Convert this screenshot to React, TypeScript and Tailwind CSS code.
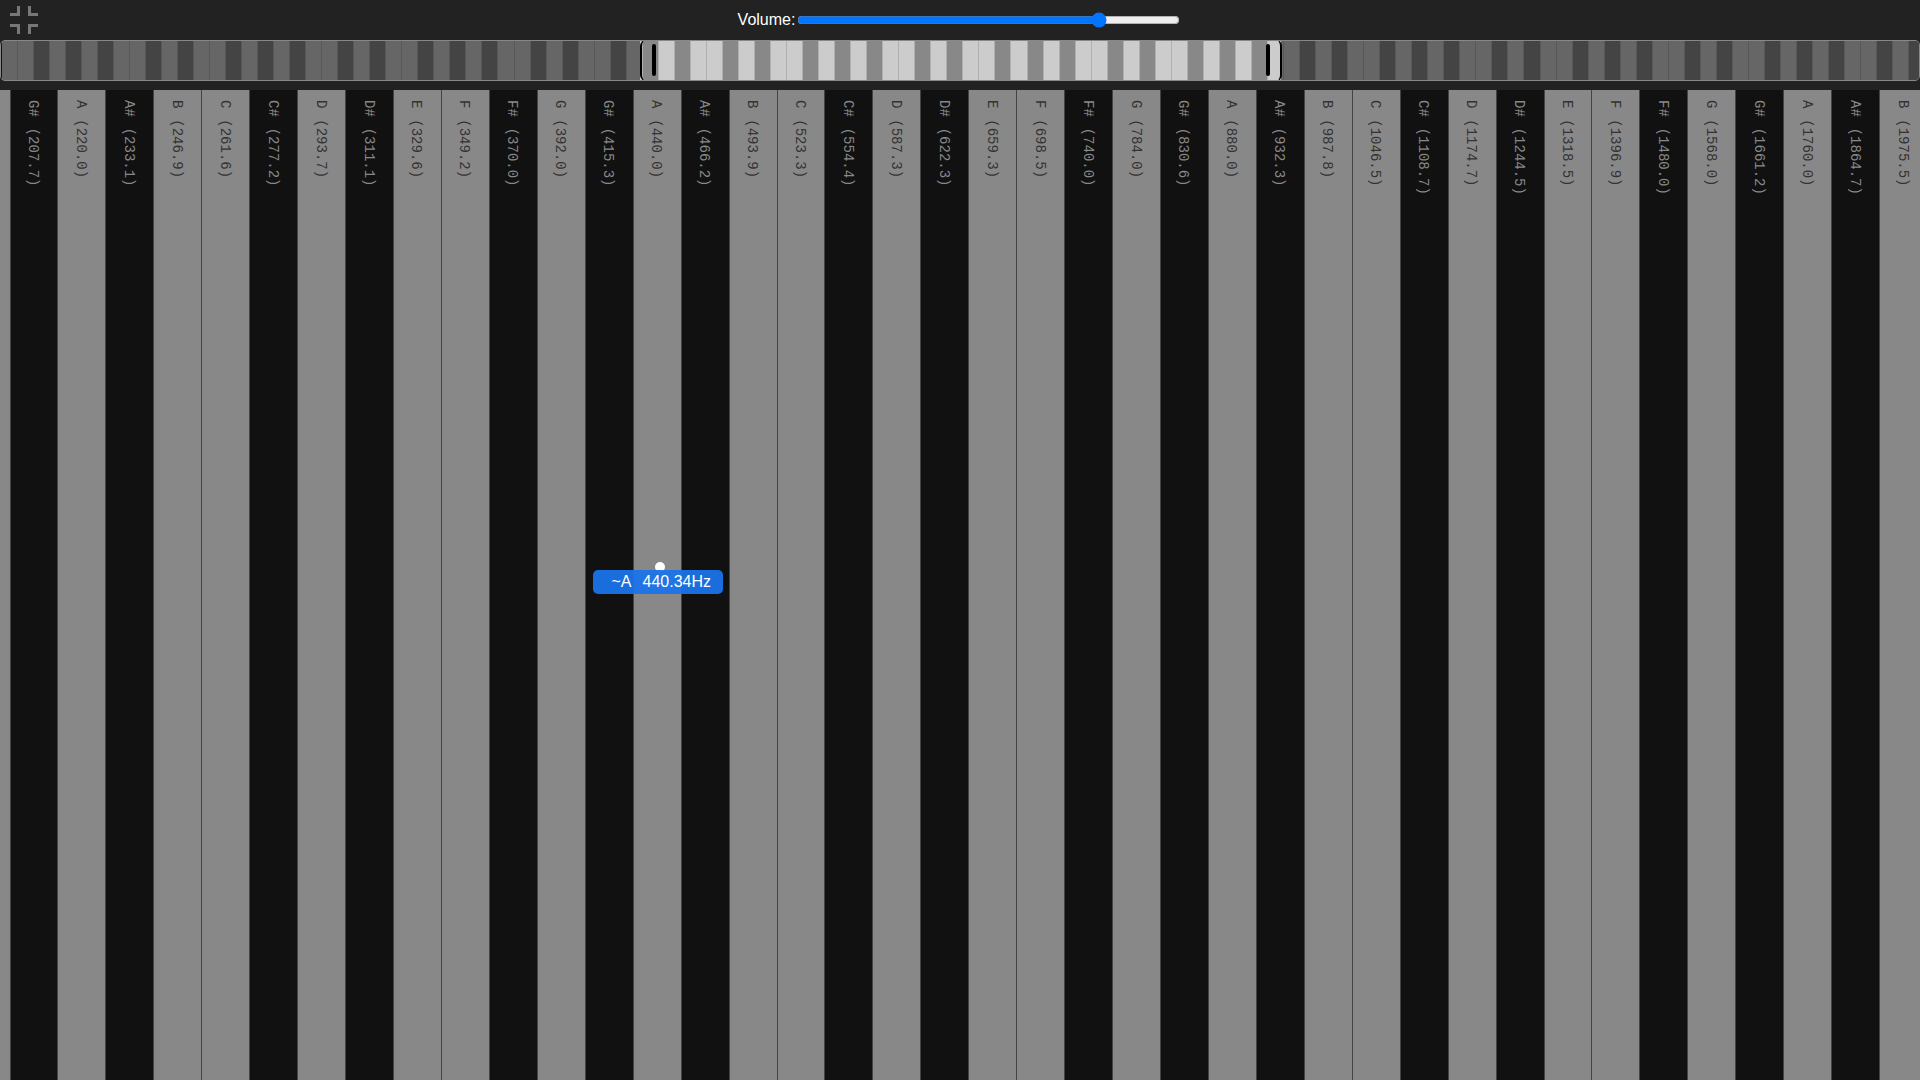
const NAMES = ["C", "C#", "D", "D#", "E", "F", "F#", "G", "G#", "A", "A#", "B"];
const noteOf = (midi: number) => NAMES[midi % 12];
const isBlack = (midi: number) => noteOf(midi).includes("#");

// Piano range on the overview strip starts at E0 (midi 16); main view starts at G#3 (midi 56).
const overview = Array.from({ length: 120 }, (_, i) => 16 + i);
const keys = Array.from({ length: 40 }, (_, i) => 56 + i);

function OverviewKey({ midi }: { midi: number }) {
  const black = isBlack(midi);
  return (
    <div
      className={`w-[16.04px] shrink-0 h-full border-r border-[#b0b0b0] ${black ? "bg-[#888888]" : "bg-[#cccccc]"}`}
    />
  );
}

function Key({ midi }: { midi: number }) {
  const black = isBlack(midi);
  const freq = 440 * Math.pow(2, (midi - 69) / 12);
  return (
    <div
      className={`w-[47.95px] shrink-0 h-full flex justify-center pt-[10px] pr-[2px] border-r border-[#444444] ${
        black ? "bg-[#111111] text-[#888888]" : "bg-[#888888] text-[#333333]"
      }`}
    >
      <span className="[writing-mode:vertical-rl] whitespace-pre font-['Liberation_Mono',monospace] text-[14px] leading-none [word-spacing:2.5px]">
        {`${noteOf(midi)} (${freq.toFixed(1)})`}
      </span>
    </div>
  );
}

export default function App() {
  return (
    <div className="relative h-[1080px] w-[1920px] overflow-hidden bg-[#222222] font-['Liberation_Sans',sans-serif] flex flex-col">
      <header className="h-[40px] shrink-0 grid grid-cols-[1fr_auto_1fr] items-center">
        <div className="pl-[6px] flex items-center">
          <svg width="36" height="36" viewBox="0 0 36 36" fill="none" stroke="#777777" strokeWidth="3" className="-translate-y-[1px]">
            <path d="M4 13.5H12.5V5" />
            <path d="M32 13.5H23.5V5" />
            <path d="M4 24.5H12.5V33" />
            <path d="M32 24.5H23.5V33" />
          </svg>
        </div>
        <label className="flex items-center text-white text-[16px]">
          <span>Volume:</span>
          <input type="range" min={0} max={100} defaultValue={80} className="w-[383px] m-[2px]" />
        </label>
        <div />
      </header>

      <div className="relative h-[41px] shrink-0 rounded-[5px] border border-[#888888] overflow-hidden">
        <div className="flex h-full pl-[0.5px]">
          {overview.map((m) => (
            <OverviewKey key={m} midi={m} />
          ))}
        </div>
        <div className="absolute left-0 top-0 h-full w-[639px] bg-black/50" />
        <div className="absolute left-[1280px] right-0 top-0 h-full bg-black/50" />
        <div className="absolute left-[638.5px] top-[-1px] h-[41px] w-[642px] rounded-[6px] border-x-2 border-black">
          <div className="absolute left-[10px] top-[4px] h-[32px] w-[4px] rounded-full bg-black" />
          <div className="absolute right-[10px] top-[4px] h-[32px] w-[4px] rounded-full bg-black" />
        </div>
      </div>

      <div className="h-[9px] shrink-0" />

      <main className="flex-1 min-h-0 flex overflow-hidden">
        <div className="w-[10.5px] shrink-0 bg-[#888888] border-r border-[#444444]" />
        {keys.map((m) => (
          <Key key={m} midi={m} />
        ))}
      </main>

      <div className="absolute left-[654.5px] top-[562px] h-[10px] w-[10px] rounded-full bg-white" />
      <div className="absolute left-[593px] top-[570px] h-[24px] w-[130px] rounded-[5px] bg-[#1a73e8]/95 text-white text-[16px] leading-[24px] whitespace-pre pl-[18.5px]">
        ~A<span className="ml-[11px]">440.34Hz</span>
      </div>
    </div>
  );
}
